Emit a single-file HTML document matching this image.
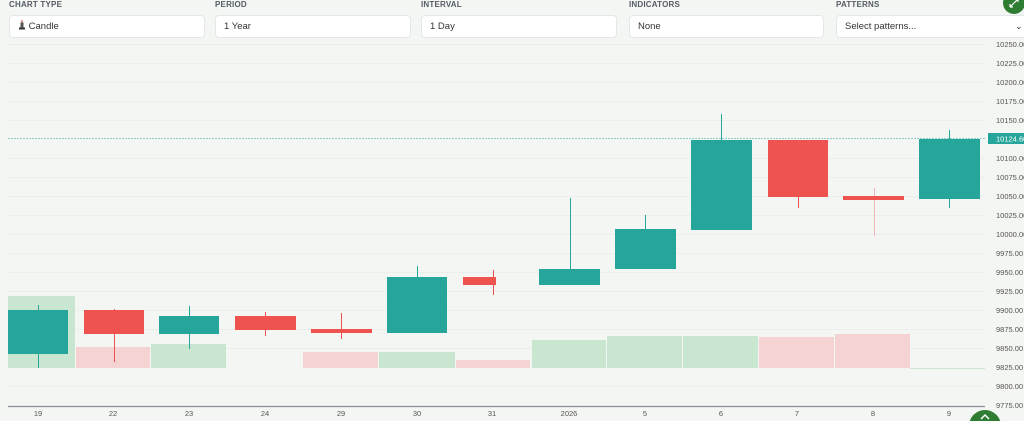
<!DOCTYPE html>
<html><head><meta charset="utf-8"><style>
body{margin:0;width:1024px;height:421px;overflow:hidden;background:#f4f6f3;font-family:"Liberation Sans",sans-serif;position:relative}
.lb{position:absolute;top:0;font-size:8px;font-weight:bold;color:#555c66;letter-spacing:.2px}
.bx{position:absolute;top:15px;height:23px;background:#fff;border:1px solid #e4e7ea;border-radius:4px;box-sizing:border-box;font-size:9.5px;color:#333;line-height:21px;padding-left:8px}
</style></head><body>
<div class="lb" style="left:9px">CHART TYPE</div>
<div class="lb" style="left:215px">PERIOD</div>
<div class="lb" style="left:421px">INTERVAL</div>
<div class="lb" style="left:629px">INDICATORS</div>
<div class="lb" style="left:836px">PATTERNS</div>
<div class="bx" style="left:9px;width:196px"><svg width="8" height="10" style="vertical-align:-1px"><line x1="4" y1="0" x2="4" y2="3" stroke="#c0392b"/><rect x="2.5" y="2.5" width="3" height="5" fill="#555"/><rect x="1" y="7.5" width="6" height="2" fill="#333"/></svg> Candle</div>
<div class="bx" style="left:215px;width:196px">1 Year</div>
<div class="bx" style="left:421px;width:196px">1 Day</div>
<div class="bx" style="left:629px;width:195px">None</div>
<div class="bx" style="left:836px;width:195px">Select patterns...<span style="position:absolute;left:178px;top:0;font-size:9px">⌄</span></div>
<svg width="1024" height="421" style="position:absolute;left:0;top:0">
<g stroke="#eceeeb" stroke-width="1">
<line x1="8" x2="985" y1="63.5" y2="63.5"/><line x1="8" x2="985" y1="82.5" y2="82.5"/><line x1="8" x2="985" y1="101.5" y2="101.5"/><line x1="8" x2="985" y1="120.5" y2="120.5"/><line x1="8" x2="985" y1="158.5" y2="158.5"/><line x1="8" x2="985" y1="177.5" y2="177.5"/><line x1="8" x2="985" y1="196.5" y2="196.5"/><line x1="8" x2="985" y1="215.5" y2="215.5"/><line x1="8" x2="985" y1="234.5" y2="234.5"/><line x1="8" x2="985" y1="253.5" y2="253.5"/><line x1="8" x2="985" y1="272.5" y2="272.5"/><line x1="8" x2="985" y1="291.5" y2="291.5"/><line x1="8" x2="985" y1="310.5" y2="310.5"/><line x1="8" x2="985" y1="329.5" y2="329.5"/><line x1="8" x2="985" y1="348.5" y2="348.5"/><line x1="8" x2="985" y1="386.5" y2="386.5"/>
</g>
<line x1="8" x2="985" y1="44.5" y2="44.5" stroke="#eceeeb"/>
<g>
<rect x="8" y="296" width="67" height="72" fill="#c8e6d0"/>
<rect x="76" y="347" width="74" height="21" fill="#f6d3d3"/>
<rect x="151" y="344" width="75" height="24" fill="#c8e6d0"/>
<rect x="303" y="352" width="75" height="16" fill="#f6d3d3"/>
<rect x="379" y="352" width="76" height="16" fill="#c8e6d0"/>
<rect x="456" y="360" width="74" height="8" fill="#f6d3d3"/>
<rect x="532" y="340" width="74" height="28" fill="#c8e6d0"/>
<rect x="607" y="336" width="75" height="32" fill="#c8e6d0"/>
<rect x="683" y="336" width="75" height="32" fill="#c8e6d0"/>
<rect x="759" y="337" width="75" height="31" fill="#f6d3d3"/>
<rect x="835" y="334" width="75" height="34" fill="#f6d3d3"/>
<line x1="910" x2="985" y1="368.5" y2="368.5" stroke="#c8e6d0"/>
</g>
<line x1="8" x2="985" y1="138.5" y2="138.5" stroke="#8fcfc6" stroke-dasharray="2,1"/>
<g stroke-width="1">
<line x1="38.5" x2="38.5" y1="305" y2="368" stroke="#26a69a"/><rect x="8" y="310" width="60" height="44" fill="#26a69a"/>
<line x1="114.5" x2="114.5" y1="309" y2="362" stroke="#ef5350"/><rect x="84" y="310" width="60" height="24" fill="#ef5350"/>
<line x1="189.5" x2="189.5" y1="306" y2="349" stroke="#26a69a"/><rect x="159" y="316" width="60" height="18" fill="#26a69a"/>
<line x1="265.5" x2="265.5" y1="312" y2="336" stroke="#ef5350"/><rect x="235" y="316" width="61" height="14" fill="#ef5350"/>
<line x1="341.5" x2="341.5" y1="313" y2="339" stroke="#ef5350"/><rect x="311" y="329" width="61" height="4" fill="#ef5350"/>
<line x1="417.5" x2="417.5" y1="266" y2="333" stroke="#26a69a"/><rect x="387" y="277" width="60" height="56" fill="#26a69a"/>
<line x1="493.5" x2="493.5" y1="270" y2="295" stroke="#ef5350"/><rect x="463" y="277" width="33" height="8" fill="#ef5350"/>
<line x1="570.5" x2="570.5" y1="198" y2="285" stroke="#26a69a"/><rect x="539" y="269" width="61" height="16" fill="#26a69a"/>
<line x1="645.5" x2="645.5" y1="215" y2="269" stroke="#26a69a"/><rect x="615" y="229" width="61" height="40" fill="#26a69a"/>
<line x1="721.5" x2="721.5" y1="114" y2="229" stroke="#26a69a"/><rect x="691" y="140" width="61" height="90" fill="#26a69a"/>
<line x1="798.5" x2="798.5" y1="140" y2="208" stroke="#ef5350"/><rect x="768" y="140" width="60" height="57" fill="#ef5350"/>
<line x1="874.5" x2="874.5" y1="188" y2="236" stroke="#f4b5b5"/><rect x="843" y="196" width="61" height="4" fill="#ef5350"/>
<line x1="949.5" x2="949.5" y1="130" y2="208" stroke="#26a69a"/><rect x="919" y="139" width="61" height="60" fill="#26a69a"/>
</g>
<line x1="8" x2="985" y1="406.5" y2="406.5" stroke="#8a8f98" stroke-width="1.2"/>
<g font-size="7.5" fill="#555" text-anchor="middle" font-family="Liberation Sans">
<text x="38" y="416">19</text><text x="113" y="416">22</text><text x="189" y="416">23</text><text x="265" y="416">24</text><text x="341" y="416">29</text><text x="417" y="416">30</text><text x="492" y="416">31</text><text x="569" y="416">2026</text><text x="645" y="416">5</text><text x="721" y="416">6</text><text x="797" y="416">7</text><text x="873" y="416">8</text><text x="949" y="416">9</text>
</g>
<g font-size="7.5" fill="#555" font-family="Liberation Sans">
<text x="996" y="47">10250.00</text><text x="996" y="66">10225.00</text><text x="996" y="85">10200.00</text><text x="996" y="104">10175.00</text><text x="996" y="123">10150.00</text><text x="996" y="161">10100.00</text><text x="996" y="180">10075.00</text><text x="996" y="199">10050.00</text><text x="996" y="218">10025.00</text><text x="996" y="237">10000.00</text><text x="996" y="256">9975.00</text><text x="996" y="275">9950.00</text><text x="996" y="294">9925.00</text><text x="996" y="313">9900.00</text><text x="996" y="332">9875.00</text><text x="996" y="351">9850.00</text><text x="996" y="370">9825.00</text><text x="996" y="389">9800.00</text><text x="996" y="408">9775.00</text>
</g>
<rect x="988" y="133" width="36" height="11" fill="#26a69a"/>
<text x="996" y="141.5" font-size="7.5" fill="#fff" font-family="Liberation Sans">10124.60</text>
<circle cx="1014" cy="3" r="11" fill="#2e7d32"/>
<path d="M1010 7 L1018 -1 M1010 7 v-3 M1010 7 h3 M1018 -1 v3" stroke="#fff" stroke-width="1.2" fill="none"/>
<circle cx="985" cy="426" r="16" fill="#2e7d32"/>
<path d="M981 419 L985 415 L989 419" stroke="#fff" stroke-width="1.5" fill="none"/>
</svg>
</body></html>
